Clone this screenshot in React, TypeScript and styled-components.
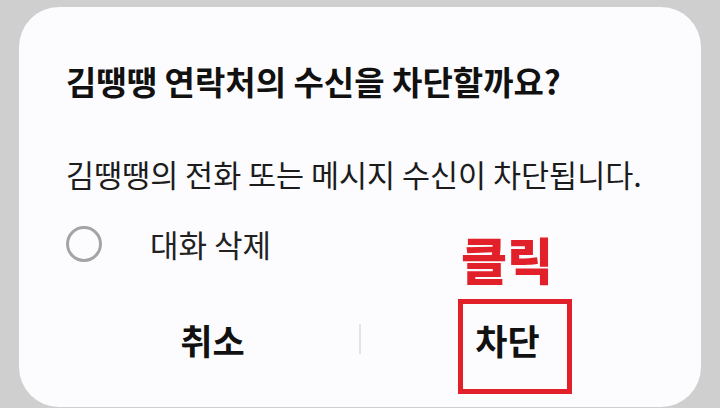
import React from 'react';
import styled, { createGlobalStyle } from 'styled-components';

const Global = createGlobalStyle`
  html, body {
    margin: 0;
    padding: 0;
    background: #cfcfcf;
  }
  body {
    font-family: "Noto Sans CJK KR", "Noto Sans", sans-serif;
    color: #111;
  }
`;

const Screen = styled.div`
  width: 720px;
  height: 408px;
  overflow: hidden;
  padding: 7px 19px 0;
  box-sizing: border-box;
  background: #cfcfcf;
`;

const Card = styled.div`
  position: relative;
  height: 400px;
  box-sizing: border-box;
  background: #fcfcfe;
  border-radius: 40px;
  padding: 54px 47px 0;
  display: flex;
  flex-direction: column;
`;

const Title = styled.h1`
  margin: 0;
  font-size: 33px;
  font-weight: 700;
  line-height: 40px;
  color: #111;
`;

const Message = styled.p`
  margin: 53px 0 0;
  font-size: 30.5px;
  font-weight: 400;
  line-height: 40px;
  color: #1c1c1c;
`;

const OptionRow = styled.label`
  margin-top: 26px;
  height: 48px;
  display: flex;
  align-items: center;
  gap: 48px;
`;

const Radio = styled.span`
  width: 36px;
  height: 36px;
  box-sizing: border-box;
  border: 3px solid #a4a4a4;
  border-radius: 50%;
  flex-shrink: 0;
`;

const OptionText = styled.span`
  font-size: 31px;
  line-height: 40px;
  color: #222;
`;

const Actions = styled.div`
  margin-top: 39px;
  height: 64px;
  display: flex;
  align-items: center;
`;

const Action = styled.div`
  position: relative;
  flex: 1;
  height: 100%;
  display: flex;
  align-items: center;
  justify-content: center;
  font-size: 35px;
  font-weight: 700;
  color: #111;
`;

const Divider = styled.div`
  width: 2px;
  height: 30px;
  background: #e4e4e6;
`;

const Frame = styled.div`
  position: absolute;
  left: 97px;
  top: -8px;
  width: 114px;
  height: 95px;
  box-sizing: border-box;
  border: 5px solid #e1202a;
`;

const Callout = styled.span`
  position: absolute;
  left: 100px;
  top: -74px;
  font-size: 50px;
  line-height: 50px;
  font-weight: 900;
  color: #e1202a;
  white-space: nowrap;
`;

export default function App() {
  return (
    <Screen>
      <Global />
      <Card>
        <Title>김땡땡 연락처의 수신을 차단할까요?</Title>
        <Message>김땡땡의 전화 또는 메시지 수신이 차단됩니다.</Message>
        <OptionRow>
          <Radio />
          <OptionText>대화 삭제</OptionText>
        </OptionRow>
        <Actions>
          <Action>취소</Action>
          <Divider />
          <Action>
            차단
            <Callout>클릭</Callout>
            <Frame />
          </Action>
        </Actions>
      </Card>
    </Screen>
  );
}
